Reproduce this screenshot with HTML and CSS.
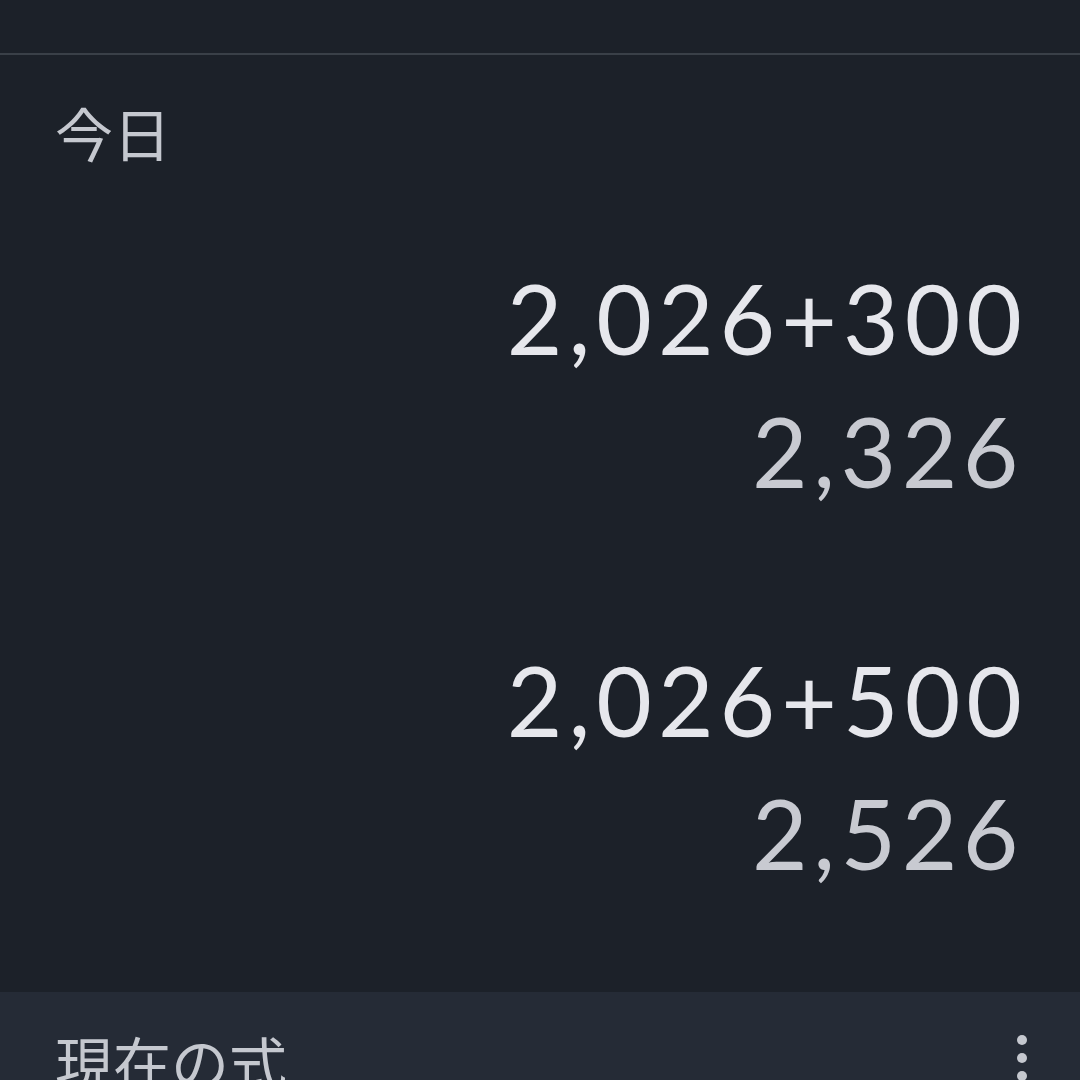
FILE: index.html
```html
<!DOCTYPE html>
<html lang="ja">
<head>
    <meta charset="UTF-8">
    <meta name="viewport" content="width=device-width, initial-scale=1.0">
    <title>電卓</title>
    <link rel="stylesheet" href="styles.css">
</head>
<body>
    <div class="topbar"></div>
    <div class="history">
        <div class="label">今日</div>
        <div class="entry">
            <div class="expr">2,026+300</div>
            <div class="result">2,326</div>
        </div>
        <div class="entry">
            <div class="expr">2,026+500</div>
            <div class="result">2,526</div>
        </div>
    </div>
    <div class="current">
        <div class="label">現在の式</div>
        <div class="menu">
            <span class="dot"></span>
            <span class="dot"></span>
            <span class="dot"></span>
        </div>
    </div>
</body>
</html>
```

FILE: styles.css
```css
html, body {
    margin: 0;
    height: 1080px;
    overflow: hidden;
}
body {
    background-color: #1c2129;
    font-family: "Noto Sans CJK JP", "Noto Sans", sans-serif;
    display: flex;
    flex-direction: column;
}
.topbar {
    height: 53px;
    flex-shrink: 0;
    border-bottom: 2px solid #3a4048;
}
.history {
    height: 937px;
    flex-shrink: 0;
    padding: 0 52px 0 55px;
    display: flex;
    flex-direction: column;
}
.label {
    font-size: 58px;
    line-height: 58px;
    color: #c5c8cf;
    margin-top: 48px;
}
.history .label {
    margin-bottom: 90px;
}
.entry {
    display: flex;
    flex-direction: column;
    align-items: flex-end;
    font-family: Lato, "Open Sans", sans-serif;
    font-size: 96px;
    line-height: 133px;
}
.entry + .entry {
    margin-top: 116px;
}
.expr {
    color: #e6e7ec;
    letter-spacing: 6px;
}
.result {
    color: #c8cad1;
    letter-spacing: 5.5px;
    margin-right: 4px;
}
.current {
    flex: 1;
    background-color: #252b36;
    padding: 0 53px 0 55px;
    display: flex;
    justify-content: space-between;
    align-items: flex-start;
}
.current .label {
    margin-top: 40px;
}
.menu {
    display: flex;
    flex-direction: column;
    gap: 8px;
    margin-top: 43px;
}
.dot {
    width: 10px;
    height: 10px;
    border-radius: 50%;
    background-color: #c5c8cf;
}
```
